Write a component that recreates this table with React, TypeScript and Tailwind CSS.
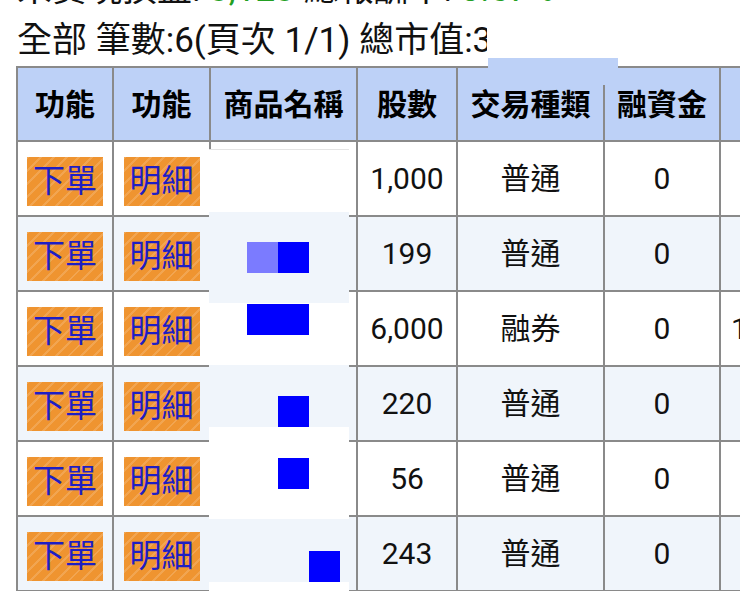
import React from "react";

type Row = { qty: string; kind: string; loan: string; extra?: string };

const rows: Row[] = [
    { qty: "1,000", kind: "普通", loan: "0" },
    { qty: "199", kind: "普通", loan: "0" },
    { qty: "6,000", kind: "融券", loan: "0", extra: "1,242" },
    { qty: "220", kind: "普通", loan: "0" },
    { qty: "56", kind: "普通", loan: "0" },
    { qty: "243", kind: "普通", loan: "0" },
];

// 遮蔽區塊 (商品名稱欄)
const masks = [
    { h: "h-[63px]", bg: "bg-white border-t border-[#e4e4e4]" },
    { h: "h-[91px]", bg: "bg-[#f0f5fb]" },
    { h: "h-[62px]", bg: "bg-white" },
    { h: "h-[62px]", bg: "bg-[#f0f5fb]" },
    { h: "h-[92px]", bg: "bg-white" },
    { h: "h-[63px]", bg: "bg-[#f0f5fb]" },
    { h: "h-[20px]", bg: "bg-white" },
];

const OrderBtn = ({ label }: { label: string }) => (
    <span className="inline-block mt-[6px] w-[76px] h-[49px] leading-[49px] text-center text-[32px] text-[#1e1ec4] bg-[#ef9430] bg-[repeating-linear-gradient(135deg,rgba(255,255,255,0.16)_0px,rgba(255,255,255,0.16)_2px,transparent_2px,transparent_9px)]">
        {label}
    </span>
);

const th = "border-2 border-[#8a8a8a] bg-[#bdd1f7] font-bold text-[30px] text-black text-center whitespace-nowrap overflow-hidden";
const td = "border-2 border-[#8a8a8a] text-[30px] text-[#111] text-center whitespace-nowrap overflow-hidden";

export default function App() {
    return (
        <div className="relative w-[740px] h-[591px] overflow-hidden bg-white font-[Roboto,'Noto_Sans_CJK_TC',sans-serif]">
            <div className="pl-[17px] mt-[-30px] h-[40px] leading-[40px] text-[35px] text-[#111] whitespace-nowrap">
                未實現損益: <span className="text-[#22a022]">3,123</span> 總報酬率: <span className="text-[#22a022]">0.57%</span>
            </div>
            <div className="pl-[17px] mt-[9px] h-[44px] leading-[44px] text-[35px] text-[#111] whitespace-nowrap">
                全部 筆數:6(頁次 1/1) 總市值:3,582,400
            </div>

            <table className="ml-[16px] mt-[3px] border-collapse table-fixed w-[905px]">
                <colgroup>
                    <col className="w-[96px]" />
                    <col className="w-[97px]" />
                    <col className="w-[147px]" />
                    <col className="w-[100px]" />
                    <col className="w-[147px]" />
                    <col className="w-[116px]" />
                    <col className="w-[202px]" />
                </colgroup>
                <thead>
                    <tr className="h-[74px]">
                        <th className={th}>功能</th>
                        <th className={th}>功能</th>
                        <th className={th}>商品名稱</th>
                        <th className={th}>股數</th>
                        <th className={th}>交易種類</th>
                        <th className={th}>融資金</th>
                        <th className={`${th} text-left pl-[30px]`}>融券保證金</th>
                    </tr>
                </thead>
                <tbody>
                    {rows.map((r, i) => (
                        <tr key={i} className={`h-[75px] ${i % 2 ? "bg-[#f0f5fb]" : "bg-white"}`}>
                            <td className={td}>
                                <OrderBtn label="下單" />
                            </td>
                            <td className={td}>
                                <OrderBtn label="明細" />
                            </td>
                            <td className={td}></td>
                            <td className={td}>{r.qty}</td>
                            <td className={td}>{r.kind}</td>
                            <td className={td}>{r.loan}</td>
                            <td className={`${td} text-left pl-[10px]`}>{r.extra ?? ""}</td>
                        </tr>
                    ))}
                </tbody>
            </table>

            {/* 遮蔽 */}
            <div className="absolute left-[487px] top-[20px] w-[260px] h-[37px] bg-white" />
            <div className="absolute left-[488px] top-[58px] w-[130px] h-[27px] bg-[#bdd1f7]" />
            <div className="absolute left-[209px] top-[149px] w-[140px] flex flex-col">
                {masks.map((m, i) => (
                    <div key={i} className={`${m.h} ${m.bg}`} />
                ))}
            </div>
            <div className="absolute left-[247px] top-[242px] flex">
                <div className="w-[31px] h-[31px] bg-[#7b7bff]" />
                <div className="w-[31px] h-[31px] bg-[#0000ff]" />
            </div>
            <div className="absolute left-[247px] top-[304px] w-[62px] h-[31px] bg-[#0000ff]" />
            <div className="absolute left-[278px] top-[396px] w-[31px] h-[31px] bg-[#0000ff]" />
            <div className="absolute left-[278px] top-[458px] w-[31px] h-[31px] bg-[#0000ff]" />
            <div className="absolute left-[309px] top-[551px] w-[31px] h-[31px] bg-[#0000ff]" />
        </div>
    );
}
